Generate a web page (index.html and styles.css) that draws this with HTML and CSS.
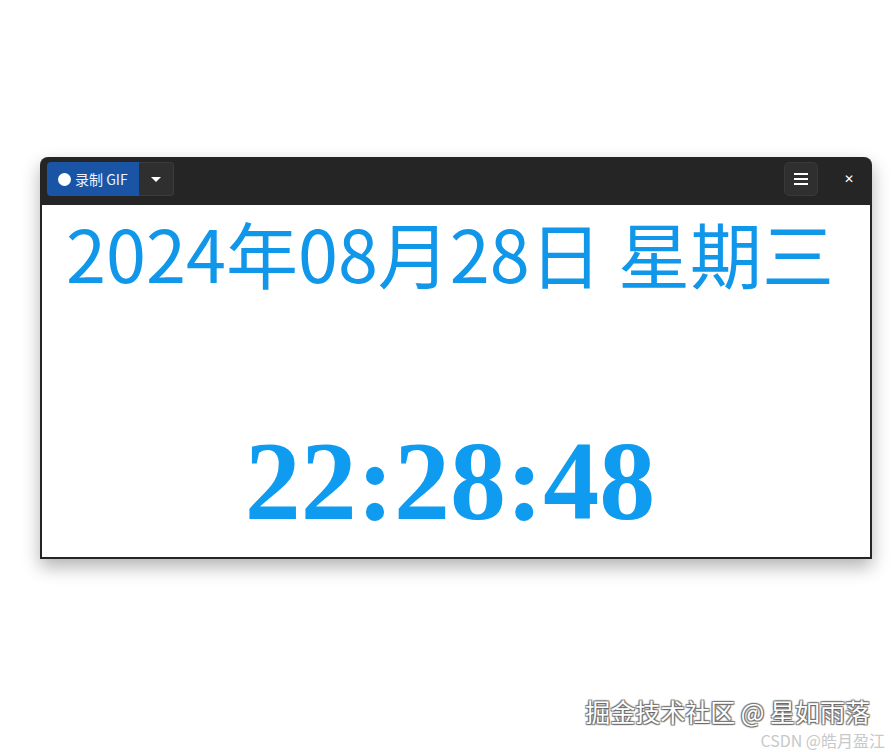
FILE: index.html
```html
<!DOCTYPE html>
<html lang="zh-CN">
<head>
    <meta charset="UTF-8">
    <title>时钟</title>
    <link rel="stylesheet" href="styles.css">
</head>
<body>
    <div class="stage">
        <div class="window">
            <div class="titlebar">
                <div class="record-group">
                    <button class="record-button"><span class="dot"></span>录制 GIF</button>
                    <button class="drop-button"><span class="caret"></span></button>
                </div>
                <div class="title-actions">
                    <button class="menu-button">
                        <span></span><span></span><span></span>
                    </button>
                    <button class="close-button">&#x2715;</button>
                </div>
            </div>
            <div class="content">
                <div class="date">2024年08月28日 星期三</div>
                <div class="time">22:28:48</div>
            </div>
        </div>
    </div>
    <div class="watermark">
        <div class="wm-main">掘金技术社区 @ 星如雨落</div>
        <div class="wm-sub">CSDN @皓月盈江</div>
    </div>
</body>
</html>
```

FILE: styles.css
```css
* {
    box-sizing: border-box;
}

body {
    margin: 0;
    width: 892px;
    height: 752px;
    background: #fff;
    font-family: "Noto Sans CJK SC", "Noto Sans", sans-serif;
    overflow: hidden;
    position: relative;
}

.stage {
    padding: 157px 0 0 40px;
}

.window {
    width: 832px;
    height: 402px;
    background: #252525;
    border-radius: 8px 8px 0 0;
    padding: 0 2px 2px;
    display: flex;
    flex-direction: column;
    box-shadow: 0 8px 18px rgba(0, 0, 0, 0.3);
}

.titlebar {
    height: 48px;
    flex: none;
    display: flex;
    align-items: center;
    justify-content: space-between;
    padding: 0 4px 4px 5px;
}

button {
    font-family: inherit;
    border: none;
    margin: 0;
    cursor: pointer;
    color: #fff;
}

.record-group {
    display: flex;
    height: 34px;
}

.record-button {
    width: 92px;
    height: 34px;
    background: #1a55a5;
    border-radius: 4px 0 0 4px;
    font-size: 14px;
    display: flex;
    align-items: center;
    gap: 4px;
    padding: 0 0 0 11px;
    color: #eef3fb;
}

.dot {
    width: 13px;
    height: 13px;
    border-radius: 50%;
    background: #fff;
}

.drop-button {
    width: 35px;
    height: 34px;
    background: #2f2f2f;
    border: 1px solid #3c3c3c;
    border-left: none;
    border-radius: 0 4px 4px 0;
    display: flex;
    align-items: center;
    justify-content: center;
    padding: 0;
}

.caret {
    width: 0;
    height: 0;
    border-left: 5px solid transparent;
    border-right: 5px solid transparent;
    border-top: 5px solid #fff;
}

.title-actions {
    display: flex;
    align-items: center;
    gap: 14px;
}

.menu-button {
    width: 34px;
    height: 34px;
    background: #2f2f2f;
    border: 1px solid #393939;
    border-radius: 5px;
    display: flex;
    flex-direction: column;
    align-items: center;
    justify-content: center;
    gap: 3px;
    padding: 0;
}

.menu-button span {
    width: 14px;
    height: 2px;
    background: #fff;
}

.close-button {
    width: 34px;
    height: 34px;
    background: none;
    font-size: 12px;
    font-weight: bold;
    padding: 0;
    font-family: "DejaVu Sans", sans-serif;
}

.content {
    flex: 1;
    background: #fff;
    display: flex;
    flex-direction: column;
    align-items: center;
    color: #1197ea;
}

.date {
    font-size: 72px;
    line-height: 1;
    margin-top: 11px;
    padding-right: 12px;
    white-space: nowrap;
}

.time {
    font-family: "Liberation Serif", serif;
    font-weight: bold;
    font-size: 112px;
    line-height: 1;
    margin-top: 137px;
    padding-right: 12px;
    color: #0f9bf0;
}

.watermark {
    position: absolute;
    right: 7px;
    bottom: 0;
    text-align: right;
}

.wm-main {
    font-size: 25px;
    line-height: 36px;
    color: #fff;
    text-shadow: 1px 1px 1px #666, -1px -1px 1px #777, 1px -1px 1px #777, -1px 1px 1px #777;
    margin-right: 15px;
}

.wm-sub {
    font-size: 16px;
    line-height: 23px;
    color: #c8c8c8;
}
```
